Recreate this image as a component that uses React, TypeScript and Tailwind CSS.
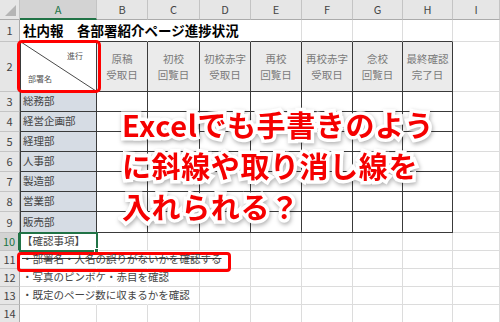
import React from "react";

const cols = ["A", "B", "C", "D", "E", "F", "G", "H", "I"];

const heads: string[][] = [
  ["原稿", "受取日"],
  ["初校", "回覧日"],
  ["初校赤字", "受取日"],
  ["再校", "回覧日"],
  ["再校赤字", "受取日"],
  ["念校", "回覧日"],
  ["最終確認", "完了日"],
];

const depts = ["総務部", "経営企画部", "経理部", "人事部", "製造部", "営業部", "販売部"];

// how many columns the note text in column A runs over (rows 10-13)
const notes: Record<number, { text: string; strike?: boolean; span: number }> = {
  10: { text: "【確認事項】", span: 0 },
  11: { text: "・部署名・人名の誤りがないかを確認する", strike: true, span: 3 },
  12: { text: "・写真のピンボケ・赤目を確認", span: 2 },
  13: { text: "・既定のページ数に収まるかを確認", span: 2 },
};

function BodyCell({ r, c }: { r: number; c: number }) {
  const inTable = r >= 2 && r <= 9 && c >= 1 && c <= 8;

  const bottom = r >= 1 && r <= 9 && c >= 1 && c <= 8 ? "border-b-[#3a3a3a]" : "border-b-[#dcdcdc]";
  let right = "border-r-[#dcdcdc]";
  if (inTable) right = "border-r-[#3a3a3a]";
  else if (r === 1 && c <= 4) right = "border-r-transparent";
  else if (notes[r] && c <= notes[r].span) right = "border-r-transparent";
  const left = inTable && c === 1 ? "border-l border-l-[#3a3a3a]" : "";

  let bg = "bg-white";
  if (r === 2 && c >= 2 && c <= 8) bg = "bg-[#ebebeb]";
  if (r >= 3 && r <= 9 && c === 1) bg = "bg-[#d6dce4]";
  if (notes[r] || r === 1) bg = "bg-transparent";

  let content: React.ReactNode = null;

  if (r === 1 && c === 1) {
    content = (
      <span className="relative z-10 whitespace-nowrap pl-[3px] text-[13.5px] font-bold leading-none text-black">
        社内報　各部署紹介ページ進捗状況
      </span>
    );
  } else if (r === 2 && c === 1) {
    // diagonal split header cell
    content = (
      <div className="relative flex h-full w-full flex-col justify-between pt-[10px] pr-[13px] pb-[8px] pl-[7px] text-[8px] leading-none text-[#555]">
        <svg className="absolute inset-0 h-full w-full" viewBox="0 0 76 49" preserveAspectRatio="none">
          <line x1="0" y1="0" x2="76" y2="49" stroke="#333" strokeWidth="0.9" />
        </svg>
        <span className="self-end">進行</span>
        <span className="self-start">部署名</span>
      </div>
    );
  } else if (r === 2 && c >= 2 && c <= 8) {
    const h = heads[c - 2];
    content = (
      <div className="flex h-full w-full flex-col items-center justify-center gap-[6px] pt-[1px] text-[10.5px] leading-none text-[#7a7a7a]">
        <span className="whitespace-nowrap">{h[0]}</span>
        <span className="whitespace-nowrap">{h[1]}</span>
      </div>
    );
  } else if (r >= 3 && r <= 9 && c === 1) {
    content = <span className="pl-[2px] text-[10.5px] leading-none text-[#444]">{depts[r - 3]}</span>;
  } else if (notes[r] && c === 1) {
    const n = notes[r];
    content = (
      <span
        className={`relative z-10 whitespace-nowrap pl-[2px] text-[10.5px] leading-none text-[#444] ${
          n.strike ? "line-through decoration-[#333]" : ""
        }`}
      >
        {n.text}
      </span>
    );
  }

  return (
    <div className={`flex items-center overflow-visible border-r border-b ${right} ${bottom} ${left} ${bg}`}>
      {content}
    </div>
  );
}

export default function App() {
  const rows = Array.from({ length: 15 }, (_, i) => i);

  return (
    <div className="relative h-[322px] w-[500px] overflow-hidden bg-white font-['Noto_Sans_CJK_JP','Noto_Sans',sans-serif]">
      <div className="grid grid-cols-[20px_77px_51px_52px_51px_51px_51px_50px_50px_1fr] grid-rows-[20px_22px_50px_20px_20px_20px_20px_20px_20px_21px_18px_18px_18px_18px_18px]">
        {rows.map((r) =>
          [0, ...cols.map((_, i) => i + 1)].map((c) => {
            if (r === 0 && c === 0) {
              return (
                <div key="corner" className="flex items-end justify-end border-r border-b border-r-[#c4c4c4] border-b-[#ababab] bg-[#e6e6e6] p-[3px]">
                  <svg width="11" height="11" viewBox="0 0 11 11">
                    <polygon points="11,0 11,11 0,11" fill="#b5b5b5" />
                  </svg>
                </div>
              );
            }
            if (r === 0) {
              const sel = c === 1;
              return (
                <div
                  key={`h${c}`}
                  className={`flex items-center justify-center border-r text-[11px] leading-none ${
                    sel
                      ? "border-b-2 border-r-[#c4c4c4] border-b-[#217346] bg-[#d3d3d3] text-[#217346]"
                      : "border-b border-r-[#c4c4c4] border-b-[#ababab] bg-[#e6e6e6] text-[#444]"
                  }`}
                >
                  {cols[c - 1]}
                </div>
              );
            }
            if (c === 0) {
              const sel = r === 10;
              return (
                <div
                  key={`r${r}`}
                  className={`flex items-center justify-center border-b text-[11px] leading-none ${
                    sel
                      ? "border-r-2 border-b-[#c4c4c4] border-r-[#217346] bg-[#d3d3d3] text-[#217346]"
                      : "border-r border-b-[#c4c4c4] border-r-[#ababab] bg-[#e6e6e6] text-[#444]"
                  }`}
                >
                  {r}
                </div>
              );
            }
            return <BodyCell key={`${r}-${c}`} r={r} c={c} />;
          })
        )}
      </div>

      {/* selected cell A10 */}
      <div className="absolute left-[19px] top-[232px] h-[20px] w-[79px] border-2 border-[#217346]">
        <div className="absolute -bottom-[3px] -right-[3px] h-[5px] w-[5px] border border-white bg-[#217346]" />
      </div>

      {/* red callouts */}
      <div className="absolute left-[17px] top-[40px] h-[53px] w-[84px] rounded-[5px] border-[3px] border-[#ff0000]" />
      <div className="absolute left-[17px] top-[252px] h-[20px] w-[214px] rounded-[4px] border-[3px] border-[#ff0000]" />

      {/* headline */}
      <div className="absolute left-[122px] top-[104px] text-[29px] font-bold leading-[41px] tracking-[0.6px] text-[#f50000] [-webkit-text-stroke:7px_#fff] [paint-order:stroke_fill] [filter:drop-shadow(1px_2px_2px_rgba(0,0,0,0.3))]">
        <div className="whitespace-nowrap">Excelでも手書きのよう</div>
        <div className="whitespace-nowrap">に斜線や取り消し線を</div>
        <div className="whitespace-nowrap">入れられる？</div>
      </div>
    </div>
  );
}
